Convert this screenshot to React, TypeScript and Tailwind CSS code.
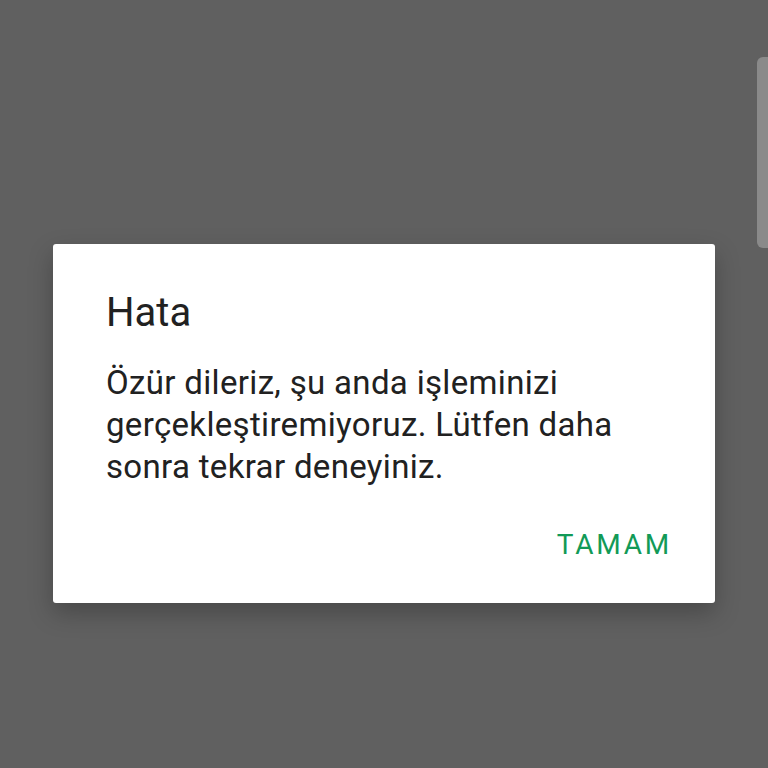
export default function App() {
  return (
    <div
      className="relative w-[768px] h-[768px] overflow-hidden bg-[#606060]"
      style={{ fontFamily: 'Roboto, "Noto Sans", sans-serif' }}
    >
      {/* scroll indicator on the right edge */}
      <div className="absolute right-0 top-[57px] w-[11px] h-[191px] rounded-l-[6px] bg-[#8a8a8a]" />

      <div className="pt-[244px] pl-[53px] pr-[53px]">
        <div className="bg-white rounded-[3px] shadow-[0_10px_24px_rgba(0,0,0,0.25)] pt-[45px] pb-[40px] pl-[53px] pr-[43px]">
          <h2 className="text-[40px] leading-[48px] text-[#212121]">Hata</h2>
          <p className="mt-[25px] text-[33px] leading-[42px] tracking-[0.01em] text-[#212121]">
            Özür dileriz, şu anda işleminizi gerçekleştiremiyoruz. Lütfen daha sonra tekrar deneyiniz.
          </p>
          <div className="mt-[39px] flex justify-end">
            <button className="text-[28px] leading-[36px] tracking-[0.1em] text-[#129a57]">
              TAMAM
            </button>
          </div>
        </div>
      </div>
    </div>
  )
}
